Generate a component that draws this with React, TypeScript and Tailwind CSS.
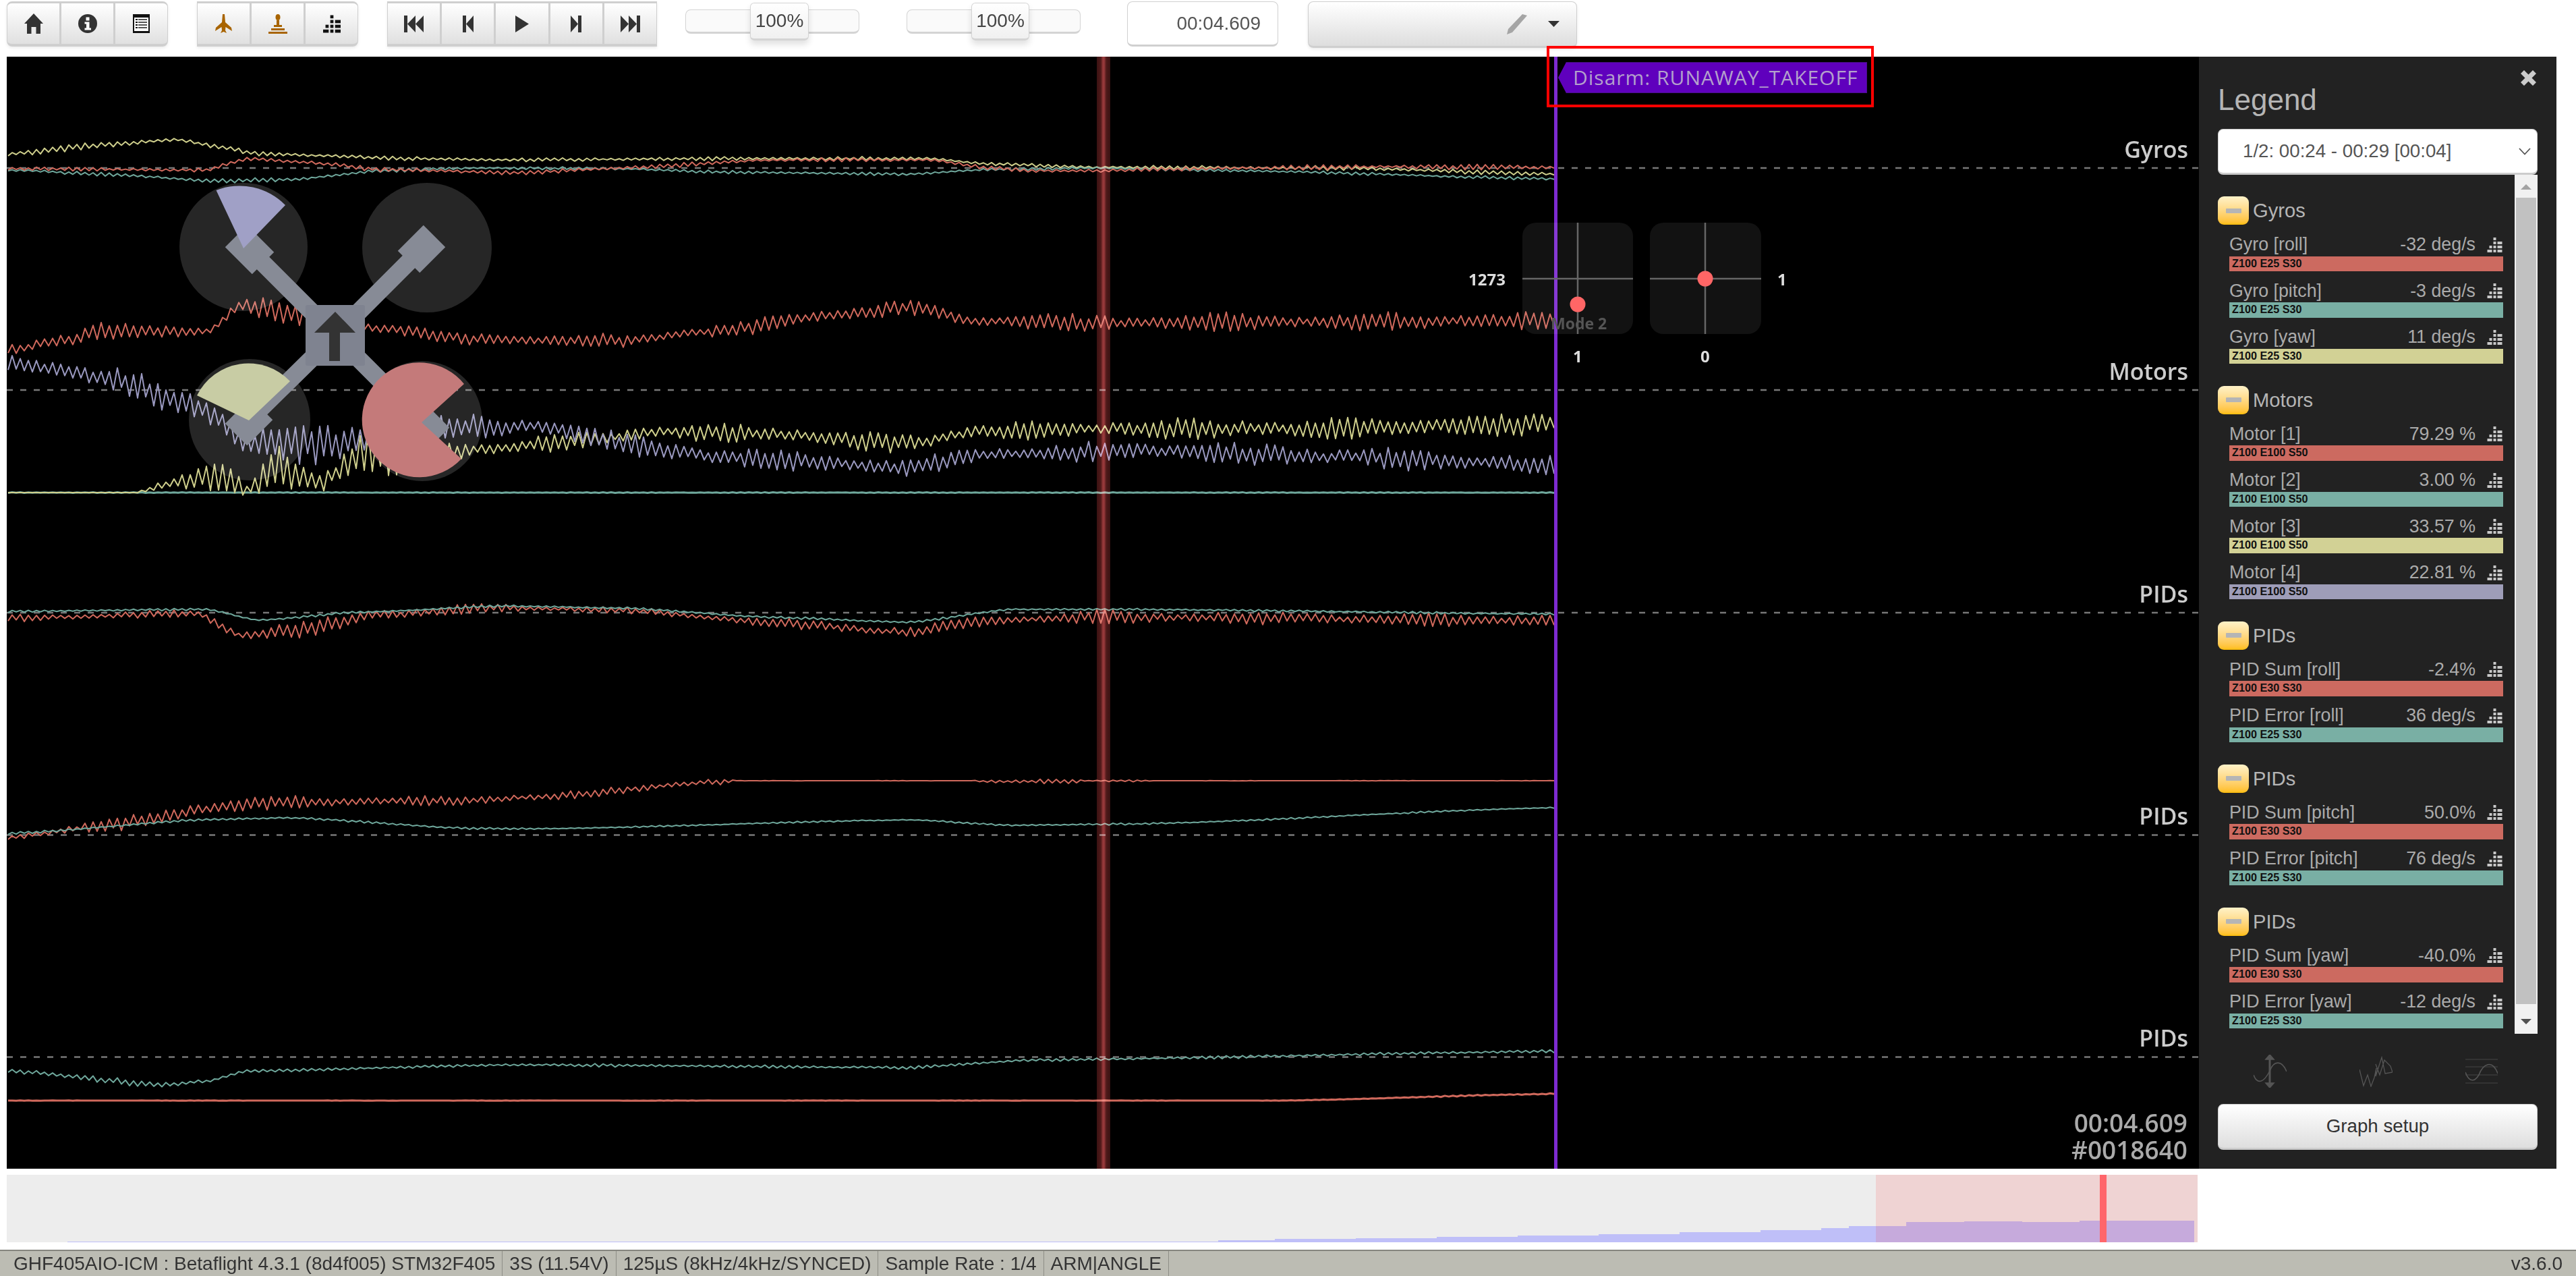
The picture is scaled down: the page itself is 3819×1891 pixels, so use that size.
import React from "react";

type Pt = [number, number, number];

const RED = "#d0695c";
const TEAL = "#6fa89c";
const YELLOW = "#cfcf8c";
const PURPLE = "#9a99c0";

// seeded so the traces stay the same between renders
function rng(seed: number) {
    let s = seed;
    return () => {
        s = (s * 16807) % 2147483647;
        return s / 2147483647;
    };
}

function trace(points: Pt[], seed: number, step = 6) {
    const rand = rng(seed * 9973);
    const out: string[] = [];
    let seg = 0;
    let i = 0;
    for (let x = points[0][0]; x <= points[points.length - 1][0]; x += step) {
        while (seg < points.length - 2 && x > points[seg + 1][0]) seg++;
        const [x0, y0, a0] = points[seg];
        const [x1, y1, a1] = points[seg + 1];
        const t = (x - x0) / (x1 - x0);
        const ease = t * t * (3 - 2 * t);
        const y = y0 + (y1 - y0) * (t * 0.5 + ease * 0.5);
        const amp = a0 + (a1 - a0) * t;
        const sign = i % 2 === 0 ? 1 : -1;
        const wobble = 0.8 + 0.25 * Math.sin(x / 37 + seed);
        const v = y + sign * amp * wobble * (0.45 + rand() * 0.75);
        out.push(`${i === 0 ? "M" : "L"}${x.toFixed(1)} ${v.toFixed(1)}`);
        i++;
    }
    return out.join(" ");
}

const traces: { color: string; d: string; width?: number }[] = [
    {
        color: YELLOW,
        d: trace([[12, 228, 5], [150, 215, 4], [260, 207, 3], [329, 218, 3], [383, 228, 3], [612, 235, 2.5], [765, 237, 2.5], [1071, 235, 2.5], [1378, 235, 2.5], [1469, 243, 2], [1622, 248, 2.5], [1990, 249, 3], [2304, 258, 3]], 11),
    },
    {
        color: TEAL,
        d: trace([[12, 252, 2], [153, 258, 2.5], [321, 268, 3], [429, 266, 2.5], [566, 253, 2.5], [704, 249, 2], [918, 250, 2], [1071, 255, 2], [1347, 258, 2], [1469, 251, 2], [1622, 249, 2], [1837, 253, 2], [2304, 265, 2]], 23),
    },
    {
        color: RED,
        d: trace([[12, 250, 2.5], [306, 252, 2.5], [367, 235, 3], [459, 241, 3], [566, 251, 3], [765, 256, 3], [918, 249, 3], [1148, 237, 2.5], [1378, 237, 2.5], [1469, 249, 2.5], [1531, 253, 2.5], [1622, 253, 3], [1837, 249, 3], [2066, 247, 3.5], [2304, 248, 3.5]], 37),
    },
    {
        color: RED,
        d: trace([[12, 519, 9], [92, 505, 14], [153, 490, 12], [306, 492, 9], [360, 452, 14], [444, 467, 14], [551, 486, 9], [719, 503, 9], [918, 505, 9], [1071, 490, 9], [1225, 467, 11], [1362, 454, 11], [1439, 475, 11], [1622, 480, 12], [1837, 477, 12], [2304, 475, 12]], 53),
    },
    {
        color: TEAL,
        d: trace([[12, 730, 0.5], [2304, 730, 0.5]], 59),
        width: 3,
    },
    {
        color: YELLOW,
        d: trace([[12, 730, 0], [199, 730, 0], [260, 715, 16], [321, 700, 30], [367, 727, 6], [413, 693, 32], [475, 716, 20], [536, 670, 34], [620, 680, 24], [704, 666, 12], [918, 647, 12], [980, 639, 12], [1148, 643, 12], [1347, 658, 13], [1454, 639, 12], [1622, 635, 14], [1990, 635, 14], [2304, 628, 15]], 67),
    },
    {
        color: PURPLE,
        d: trace([[12, 538, 12], [153, 559, 18], [291, 601, 22], [367, 655, 26], [536, 658, 28], [643, 632, 16], [796, 632, 14], [949, 662, 16], [1071, 677, 14], [1347, 693, 12], [1454, 674, 12], [1684, 668, 14], [1990, 677, 14], [2304, 689, 15]], 71),
    },
    {
        color: RED,
        d: trace([[12, 916, 5], [291, 909, 5], [357, 942, 9], [459, 931, 12], [551, 912, 10], [735, 901, 5], [918, 904, 4], [1148, 923, 6], [1347, 937, 8], [1469, 920, 7], [1622, 914, 9], [2304, 920, 9]], 83),
    },
    {
        color: TEAL,
        d: trace([[12, 906, 1.5], [306, 903, 1.5], [383, 919, 1.5], [536, 907, 1.5], [750, 898, 1.5], [918, 901, 1.5], [1148, 915, 1.5], [1347, 922, 1.5], [1500, 903, 1.5], [1684, 903, 1.5], [2304, 910, 1.5]], 89),
    },
    {
        color: RED,
        d: trace([[12, 1241, 4], [153, 1224, 8], [321, 1197, 12], [413, 1189, 9], [704, 1186, 6], [796, 1181, 6], [1071, 1158, 5], [1090, 1157, 0.2], [1440, 1157, 0.2], [1460, 1158, 3], [1590, 1158, 3], [1610, 1157, 0.2], [1680, 1157, 3], [1710, 1157, 0.2], [2304, 1157, 0.2]], 97),
    },
    {
        color: TEAL,
        d: trace([[12, 1235, 1.5], [321, 1214, 1.5], [429, 1212, 1.5], [704, 1228, 1.5], [811, 1228, 1], [1347, 1215, 1], [1500, 1223, 1.2], [1684, 1221, 1.2], [2304, 1197, 1]], 101),
    },
    {
        color: TEAL,
        d: trace([[12, 1587, 5], [245, 1608, 4], [306, 1602, 3], [367, 1587, 2], [765, 1578, 2], [1347, 1582, 2], [1531, 1571, 2], [2304, 1558, 2]], 103),
    },
    {
        color: RED,
        d: trace([[12, 1631, 0.2], [1898, 1631, 0.2], [2304, 1621, 1]], 107),
        width: 3,
    },
];

const groups = [
    {
        title: "Gyros",
        rows: [
            ["Gyro [roll]", "-32 deg/s", "Z100 E25 S30", "bg-[#cc6a60]"],
            ["Gyro [pitch]", "-3 deg/s", "Z100 E25 S30", "bg-[#79afa4]"],
            ["Gyro [yaw]", "11 deg/s", "Z100 E25 S30", "bg-[#d2d195]"],
        ],
    },
    {
        title: "Motors",
        rows: [
            ["Motor [1]", "79.29 %", "Z100 E100 S50", "bg-[#cc6a60]"],
            ["Motor [2]", "3.00 %", "Z100 E100 S50", "bg-[#79afa4]"],
            ["Motor [3]", "33.57 %", "Z100 E100 S50", "bg-[#d2d195]"],
            ["Motor [4]", "22.81 %", "Z100 E100 S50", "bg-[#9e9db8]"],
        ],
    },
    {
        title: "PIDs",
        rows: [
            ["PID Sum [roll]", "-2.4%", "Z100 E30 S30", "bg-[#cc6a60]"],
            ["PID Error [roll]", "36 deg/s", "Z100 E25 S30", "bg-[#79afa4]"],
        ],
    },
    {
        title: "PIDs",
        rows: [
            ["PID Sum [pitch]", "50.0%", "Z100 E30 S30", "bg-[#cc6a60]"],
            ["PID Error [pitch]", "76 deg/s", "Z100 E25 S30", "bg-[#79afa4]"],
        ],
    },
    {
        title: "PIDs",
        rows: [
            ["PID Sum [yaw]", "-40.0%", "Z100 E30 S30", "bg-[#cc6a60]"],
            ["PID Error [yaw]", "-12 deg/s", "Z100 E25 S30", "bg-[#79afa4]"],
        ],
    },
];

const statusCells = [
    "GHF405AIO-ICM : Betaflight 4.3.1 (8d4f005) STM32F405",
    "3S (11.54V)",
    "125µS (8kHz/4kHz/SYNCED)",
    "Sample Rate : 1/4",
    "ARM|ANGLE",
];

// stepped pyramid used for the "analyser" buttons
const Bars: React.FC<{ className?: string }> = ({ className }) => (
    <svg viewBox="0 0 22 22" className={className} fill="currentColor">
        <rect x="9" y="0" width="4" height="4" />
        <rect x="9" y="6" width="4" height="4" />
        <rect x="15" y="6" width="7" height="4" />
        <rect x="9" y="12" width="4" height="4" />
        <rect x="15" y="12" width="7" height="4" />
        <rect x="3" y="12" width="4" height="4" />
        <rect x="0" y="18" width="7" height="4" />
        <rect x="9" y="18" width="4" height="4" />
        <rect x="15" y="18" width="7" height="4" />
    </svg>
);

const Seg: React.FC<{ children: React.ReactNode; last?: boolean }> = ({ children, last }) => (
    <div className={`flex-1 h-full flex items-center justify-center ${last ? "" : "border-r-[3px] border-[#cfcfcf]"}`}>
        {children}
    </div>
);

const groupClass =
    "h-[67px] flex bg-gradient-to-b from-white to-[#e0e0e0] border-x border-t-[3px] border-b-[4px] border-[#cfcfcf] shadow-[0_2px_4px_rgba(0,0,0,0.08)]";

const Slider: React.FC<{ className: string; handle: string }> = ({ className, handle }) => (
    <div className={`relative h-[36px] mt-[12px] bg-[#fafafa] border border-b-[3px] border-[#d4d4d4] rounded-lg ${className}`}>
        <div className={`absolute top-[-11px] h-[56px] bg-gradient-to-b from-white to-[#f0f0f0] border border-b-[3px] border-[#d4d4d4] rounded-md shadow-[0_6px_10px_rgba(0,0,0,0.12)] flex items-center justify-center text-[28px] text-[#444] ${handle}`}>
            100%
        </div>
    </div>
);

const Toolbar: React.FC = () => (
    <div className="h-[84px] shrink-0 flex items-start pt-[2px] pl-[10px]">
        <div className={`${groupClass} w-[239px] rounded-lg`}>
            <Seg>
                <svg viewBox="0 0 30 30" className="w-[30px] h-[30px] text-[#333]" fill="currentColor">
                    <path d="M15 0 L29 15 L25 15 L25 30 L18.5 30 L18.5 20 L11.5 20 L11.5 30 L5 30 L5 15 L1 15 Z" />
                </svg>
            </Seg>
            <Seg>
                <svg viewBox="0 0 28 28" className="w-[28px] h-[28px]">
                    <circle cx="14" cy="14" r="14" fill="#333" />
                    <rect x="11.5" y="4.5" width="5" height="5" fill="#fff" />
                    <path d="M9.5 11.5 H16.5 V20.5 H19 V23.5 H9.5 V20.5 H12 V14.5 H9.5 Z" fill="#fff" />
                </svg>
            </Seg>
            <Seg last>
                <svg viewBox="0 0 25 28" className="w-[25px] h-[28px]">
                    <rect width="25" height="28" fill="#111" />
                    <rect x="2" y="5" width="21" height="20" fill="#fff" />
                    <rect x="4" y="7" width="3" height="2" fill="#111" />
                    <rect x="8" y="7" width="13" height="2" fill="#555" />
                    <rect x="4" y="11" width="3" height="2" fill="#111" />
                    <rect x="8" y="11" width="13" height="2" fill="#555" />
                    <rect x="4" y="15" width="3" height="2" fill="#111" />
                    <rect x="8" y="15" width="13" height="2" fill="#555" />
                    <rect x="4" y="19" width="3" height="2" fill="#111" />
                    <rect x="8" y="19" width="13" height="2" fill="#555" />
                </svg>
            </Seg>
        </div>
        <div className={`${groupClass} w-[239px] ml-[43px] rounded-r-lg`}>
            <Seg>
                <svg viewBox="0 0 25 28" className="w-[25px] h-[28px]" fill="#a86400">
                    <path d="M11 0 H14 L15 12 L24 20 L25 25 L15.5 19 L15 24 L17 28 L12.5 26 L8 28 L10 24 L9.5 19 L0 25 L1 20 L10 12 Z" />
                </svg>
            </Seg>
            <Seg>
                <svg viewBox="0 0 28 29" className="w-[28px] h-[29px]" fill="#a86400">
                    <ellipse cx="14" cy="4.5" rx="3.5" ry="4.5" />
                    <rect x="12" y="9" width="4" height="9" />
                    <rect x="8" y="16" width="12" height="3" />
                    <rect x="4" y="21" width="20" height="3" />
                    <rect x="0" y="26" width="28" height="3" />
                </svg>
            </Seg>
            <Seg last>
                <Bars className="w-[26px] h-[27px] text-[#111]" />
            </Seg>
        </div>
        <div className={`${groupClass} w-[400px] ml-[43px]`}>
            <Seg>
                <svg viewBox="0 0 29 25" className="w-[29px] h-[25px]" fill="#333">
                    <rect width="5" height="25" />
                    <path d="M5 12.5 L17 0 V25 Z M17 12.5 L29 0 V25 Z" />
                </svg>
            </Seg>
            <Seg>
                <svg viewBox="0 0 16 25" className="w-[16px] h-[25px]" fill="#333">
                    <rect width="5" height="25" />
                    <path d="M5 12.5 L16 0 V25 Z" />
                </svg>
            </Seg>
            <Seg>
                <svg viewBox="0 0 20 25" className="w-[20px] h-[25px]" fill="#333">
                    <path d="M0 0 L20 12.5 L0 25 Z" />
                </svg>
            </Seg>
            <Seg>
                <svg viewBox="0 0 16 25" className="w-[16px] h-[25px]" fill="#333">
                    <rect x="11" width="5" height="25" />
                    <path d="M11 12.5 L0 0 V25 Z" />
                </svg>
            </Seg>
            <Seg last>
                <svg viewBox="0 0 29 25" className="w-[29px] h-[25px]" fill="#333">
                    <rect x="24" width="5" height="25" />
                    <path d="M24 12.5 L12 0 V25 Z M12 12.5 L0 0 V25 Z" />
                </svg>
            </Seg>
        </div>
        <Slider className="ml-[42px] w-[258px]" handle="left-[95px] w-[87px]" />
        <Slider className="ml-[70px] w-[258px]" handle="left-[95px] w-[86px]" />
        <div className="ml-[69px] w-[224px] h-[67px] bg-white border border-b-[3px] border-[#d0d0d0] rounded-lg flex items-center justify-end pr-[25px] text-[28px] text-[#555]">
            00:04.609
        </div>
        <div className="ml-[44px] w-[399px] h-[69px] bg-gradient-to-b from-white to-[#dedede] border border-b-[3px] border-[#cfcfcf] rounded-lg flex items-center justify-end pr-[25px] shadow-[0_2px_4px_rgba(0,0,0,0.08)]">
            <svg viewBox="0 0 32 30" className="w-[32px] h-[30px] mr-[30px]" fill="#a5a5a5">
                <path d="M24 0 L31 2 L9 27 L1 30 L3 22 Z" />
            </svg>
            <svg viewBox="0 0 17 9" className="w-[17px] h-[9px]" fill="#333">
                <path d="M0 0 H17 L8.5 9 Z" />
            </svg>
        </div>
    </div>
);

const Pie: React.FC<{ d: string; fill: string }> = ({ d, fill }) => <path d={d} fill={fill} />;

// drawn straight in the canvas' own coordinates (page pixels)
const Graph: React.FC = () => (
    <svg viewBox="10 84 3250 1648" className="absolute inset-0 w-full h-full">
        {[249, 578, 908, 1237.5, 1566.5].map((y) => (
            <line key={y} x1="10" x2="3260" y1={y} y2={y} stroke="#777" strokeWidth="2.4" strokeDasharray="9 11" />
        ))}
        {traces.map((t, i) => (
            <path key={i} d={t.d} fill="none" stroke={t.color} strokeWidth={t.width ?? 2} strokeLinejoin="round" />
        ))}

        <rect x="2304" y="84" width="5" height="1648" fill="#7d2bd1" />

        {/* craft */}
        <circle cx="361" cy="366" r="95" fill="#fff" fillOpacity="0.15" />
        <circle cx="633" cy="367" r="96" fill="#fff" fillOpacity="0.15" />
        <circle cx="370" cy="622" r="90" fill="#fff" fillOpacity="0.15" />
        <circle cx="626" cy="624" r="89" fill="#fff" fillOpacity="0.15" />
        <g stroke="#878b96" fill="none" strokeLinecap="butt">
            <path d="M497 497 L380 380 M497 497 L612 382 M497 497 L380 612 M497 497 L600 600" strokeWidth="26" />
            <path d="M350 350 L390 390" strokeWidth="46" />
            <path d="M644 350 L606 388" strokeWidth="46" />
            <path d="M350 644 L388 606" strokeWidth="46" />
            <path d="M650 650 L612 612" strokeWidth="46" />
        </g>
        <rect x="453" y="452" width="88" height="90" rx="3" fill="#7f8390" />
        <path d="M497 462 L527 493 L504 493 L504 535 L488 535 L488 493 L466 493 Z" fill="#333" />
        <Pie d="M361 368 L320.5 282 A95 95 0 0 1 423 304 Z" fill="#a0a0c6" />
        <Pie d="M369 623 L292 586 A85 85 0 0 1 430 565 Z" fill="#c8cca4" />
        <Pie d="M625 626 L688 569 A85 85 0 1 0 684 680 Z" fill="#c47a7a" />

        {/* sticks */}
        <rect x="2257" y="330" width="164" height="165" rx="20" fill="#fff" fillOpacity="0.07" />
        <rect x="2446" y="330" width="165" height="165" rx="20" fill="#fff" fillOpacity="0.07" />
        <path d="M2257 413 H2421 M2339 330 V495 M2446 413 H2611 M2528 330 V495" stroke="#666" strokeWidth="2.5" />
        <circle cx="2339" cy="451" r="11.5" fill="#ff6666" />
        <circle cx="2528" cy="413" r="11.5" fill="#ff6666" />
    </svg>
);

const axisLabel = "absolute right-[16px] text-[34px] font-semibold leading-none text-[#ccc] font-['Open_Sans',sans-serif]";
const stickLabel = "absolute text-[24px] font-bold leading-none text-[#ddd] font-['Open_Sans',sans-serif]";

const Canvas: React.FC = () => (
    <div className="relative w-[3250px] bg-black overflow-hidden shrink-0">
        <Graph />
        {/* lap marker */}
        <div className="absolute top-0 bottom-0 left-[1616px] w-[20px] mix-blend-screen bg-[linear-gradient(to_right,#3a1212,#4f1a1a_30%,#96383a_45%,#96383a_55%,#4f1a1a_70%,#3a1212)]" />

        <div className="absolute left-[2300px] top-[8px] h-[46px] w-[458px] bg-[#5f00bd] border border-[#4a0f8a] [clip-path:polygon(12px_0,100%_0,100%_100%,12px_100%,0_50%)] flex items-center pl-[21px] text-[30px] leading-none tracking-[1px] text-[#b3a0cc] font-['Open_Sans',sans-serif] font-medium whitespace-nowrap">
            Disarm: RUNAWAY_TAKEOFF
        </div>

        <span className={`${axisLabel} top-[120px]`}>Gyros</span>
        <span className={`${axisLabel} top-[449px]`}>Motors</span>
        <span className={`${axisLabel} top-[779px]`}>PIDs</span>
        <span className={`${axisLabel} top-[1108px]`}>PIDs</span>
        <span className={`${axisLabel} top-[1437px]`}>PIDs</span>

        <span className={`${stickLabel} left-[2167px] top-[318px]`}>1273</span>
        <span className={`${stickLabel} left-[2625px] top-[318px]`}>1</span>
        <span className="absolute left-[2289px] top-[384px] text-[23px] font-bold leading-none text-[#555] font-['Open_Sans',sans-serif]">Mode 2</span>
        <span className={`${stickLabel} left-[2322px] top-[432px]`}>1</span>
        <span className={`${stickLabel} left-[2511px] top-[432px]`}>0</span>

        <div className="absolute right-[17px] bottom-[8px] flex flex-col items-end text-[37px] font-semibold leading-[40px] text-[#aaa] font-['Open_Sans',sans-serif]">
            <span>00:04.609</span>
            <span>#0018640</span>
        </div>
    </div>
);

const Legend: React.FC = () => (
    <div className="relative w-[530px] bg-[#222] shrink-0 px-[28px] flex flex-col text-[#b5b5b5]">
        <svg viewBox="0 0 23 23" className="absolute right-[30px] top-[20px] w-[23px] h-[23px]" fill="#ccc">
            <path d="M5 0 L11.5 6.5 L18 0 L23 5 L16.5 11.5 L23 18 L18 23 L11.5 16.5 L5 23 L0 18 L6.5 11.5 L0 5 Z" />
        </svg>
        <h4 className="mt-[39px] text-[44px] leading-[50px] font-normal text-[#b5b5b5] h-[68px]">Legend</h4>
        <div className="h-[68px] bg-white border border-b-[3px] border-[#ccc] rounded-lg flex items-center justify-between pl-[36px] pr-[9px] text-[27.7px] text-[#555]">
            <span>1/2: 00:24 - 00:29 [00:04]</span>
            <svg viewBox="0 0 18 11" className="w-[18px] h-[11px]" fill="none" stroke="#555" strokeWidth="1.8">
                <path d="M1 1 L9 9.5 L17 1" />
            </svg>
        </div>
        <div className="h-[1273px] flex relative">
            <div className="w-[423px] pt-[32px] flex flex-col gap-[32.5px]">
                {groups.map((g, i) => (
                    <div key={i}>
                        <div className="flex items-start h-[42.5px]">
                            <div className="w-[46px] h-[42px] rounded-[9px] bg-gradient-to-b from-[#fff2c8] to-[#ffbd00] flex items-center justify-center">
                                <div className="w-[23px] h-[7px] bg-[#b5b5b5] rounded-[1px]" />
                            </div>
                            <span className="ml-[6px] text-[29.2px] leading-[42px]">{g.title}</span>
                        </div>
                        {g.rows.map((r) => (
                            <div key={r[0]} className="ml-[17px] h-[68.5px] flex flex-col justify-end">
                                <div className="h-[46px] pt-[12px] flex items-center text-[26.8px] text-[#ababab]">
                                    <span className="flex-1">{r[0]}</span>
                                    <span>{r[1]}</span>
                                    <Bars className="ml-[17px] mr-px w-[23px] h-[22px] text-[#c8c8c8]" />
                                </div>
                                <div className={`h-[22.5px] pl-[4px] text-[16.2px] font-bold leading-[20px] text-[#111] ${r[3]}`}>
                                    {r[2]}
                                </div>
                            </div>
                        ))}
                    </div>
                ))}
            </div>
            <div className="absolute right-0 top-0 w-[34px] h-full bg-[#f1f1f1] flex flex-col items-center justify-between py-[14px]">
                <svg viewBox="0 0 16 8" className="w-[16px] h-[8px]" fill="#a3a3a3"><path d="M8 0 L16 8 H0 Z" /></svg>
                <svg viewBox="0 0 16 8" className="w-[16px] h-[8px]" fill="#505050"><path d="M0 0 H16 L8 8 Z" /></svg>
                <div className="absolute left-[2px] right-[2px] top-[34px] h-[1195px] bg-[#c1c1c1]" />
            </div>
        </div>
        <div className="h-[104px] flex items-center pt-[7px] text-[#555]">
            <svg viewBox="0 0 49 49" className="ml-[53px] w-[49px] h-[49px] shrink-0" fill="none" stroke="#555" strokeWidth="1.6">
                <path d="M0 30 C6 46 16 40 24 24 C30 8 42 8 49 25" />
                <path d="M24 5 V44" strokeWidth="3" />
                <path d="M24 0 L30 7 H18 Z M24 49 L18 42 H30 Z" fill="#555" />
            </svg>
            <svg viewBox="0 0 49 46" className="ml-[108px] w-[49px] h-[46px] shrink-0" fill="none" stroke="#555" strokeWidth="1.3">
                <path d="M0 20 L6 44 L12 28 L17 45 L22 32 L25 18 L24 30 L33 2 L38 26 L49 24 L46 15 L37 6 L30 28 L24 12" />
            </svg>
            <svg viewBox="0 0 48 37" className="ml-[108px] w-[48px] h-[37px] shrink-0" fill="none" stroke="#444" strokeWidth="1.2">
                <path d="M0 1 H48 M0 12 H48 M0 24 H48 M0 36 H48" />
                <path d="M0 20 C6 36 14 34 20 24 C26 8 40 0 48 22" stroke="#555" strokeWidth="1.6" />
            </svg>
        </div>
        <div className="h-[68px] bg-gradient-to-b from-white to-[#dedede] border border-b-[3px] border-[#ccc] rounded-lg flex items-center justify-center text-[27.7px] text-[#333]">
            Graph setup
        </div>
    </div>
);

const Timeline: React.FC = () => (
    <div className="relative ml-[10px] mt-[9px] h-[100px] w-[3248px] bg-[#ededed] overflow-hidden shrink-0">
        <svg viewBox="0 0 3248 100" preserveAspectRatio="none" className="absolute inset-0 w-full h-full">
            <path
                d="M90 100 V99 H1796 V97 H1880 V95 H2000 V94 H2120 V92 H2240 V90 H2360 V88 H2480 V85 H2600 V82 H2690 V79 H2731 V76 H2816 V70 H2902 V69 H2988 V70 H3073 V68 H3243 V100 Z"
                fill="#bfbff8"
            />
        </svg>
        <div className="absolute left-[2771px] top-0 bottom-0 right-0 bg-[#ff0000] opacity-[0.11]" />
        <div className="absolute left-[3103px] top-0 bottom-0 w-[10px] bg-[#ff666b]" />
    </div>
);

const StatusBar: React.FC = () => (
    <div className="mt-[11px] h-[39px] shrink-0 bg-[#bcbcb3] border-t-[2px] border-[#85857e] flex items-stretch text-[28px] text-[#333] leading-[37px] overflow-hidden">
        {statusCells.map((c) => (
            <div key={c} className="px-[10px] first:pl-[20px] border-r border-[#8e8e86] whitespace-nowrap">
                {c}
            </div>
        ))}
        <div className="ml-auto pr-[20px]">v3.6.0</div>
    </div>
);

const App: React.FC = () => (
    <div className="w-[3819px] h-[1891px] bg-white overflow-hidden relative flex flex-col font-['Liberation_Sans',Arial,sans-serif]">
        <Toolbar />
        <div className="flex h-[1648px] shrink-0 ml-[10px]">
            <Canvas />
            <Legend />
        </div>
        <Timeline />
        <StatusBar />
        {/* red box from whoever took the screenshot */}
        <div className="absolute left-[2293px] top-[68px] w-[485px] h-[91px] border-[4px] border-[#ff0000] pointer-events-none" />
    </div>
);

export default App;
